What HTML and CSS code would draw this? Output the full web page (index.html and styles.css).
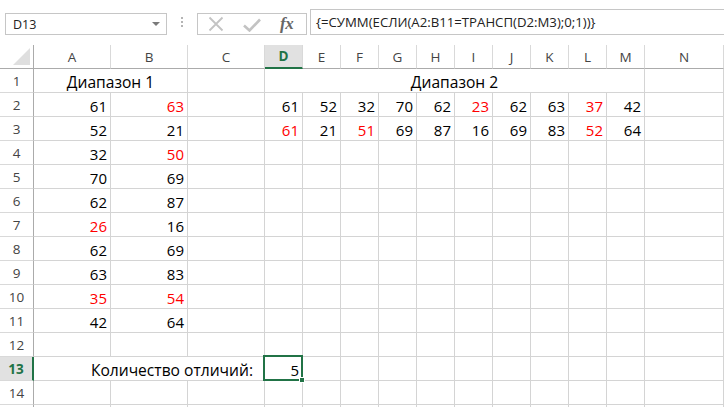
FILE: index.html
```html
<!DOCTYPE html>
<html lang="ru">
<head>
<meta charset="utf-8">
<link rel="stylesheet" href="styles.css">
</head>
<body>
<div class="app">
  <div class="toolbar">
    <div class="namebox">
      <span class="nb-text">D13</span>
      <svg class="caret" width="8" height="5" viewBox="0 0 8 5"><path d="M0 0H8L4 4Z" fill="#7a7a7a"/></svg>
    </div>
    <div class="dots"><i></i><i></i><i></i></div>
    <div class="btns">
      <svg class="ico-x" width="16" height="16" viewBox="0 0 16 16"><path d="M1.5 1.5L14.5 14.5M14.5 1.5L1.5 14.5" stroke="#c3c3c3" stroke-width="1.8" fill="none"/></svg>
      <svg class="ico-ok" width="18" height="14" viewBox="0 0 18 14"><path d="M1 7.5L6.5 12.5L17 1.5" stroke="#c3c3c3" stroke-width="2.6" fill="none"/></svg>
      <span class="fx">fx</span>
    </div>
    <div class="formula">{=СУММ(ЕСЛИ(A2:B11=ТРАНСП(D2:M3);0;1))}</div>
  </div>

  <div class="sheet">
    <!-- header row -->
    <div class="corner"><svg width="17" height="17" viewBox="0 0 17 17"><path d="M17 0V17H0Z" fill="#dfdfdf"/></svg></div>
    <div class="h">A</div><div class="h">B</div><div class="h">C</div><div class="h hsel">D</div><div class="h">E</div><div class="h">F</div><div class="h">G</div><div class="h">H</div><div class="h">I</div><div class="h">J</div><div class="h">K</div><div class="h">L</div><div class="h">M</div><div class="h">N</div>

    <!-- row 1 -->
    <div class="rh">1</div>
    <div class="c ctr txt span2">Диапазон 1</div><div class="c"></div>
    <div class="c ctr txt span10">Диапазон 2</div><div class="c"></div>

    <!-- row 2 -->
    <div class="rh">2</div>
    <div class="c n">61</div><div class="c n r">63</div><div class="c"></div>
    <div class="c n">61</div><div class="c n">52</div><div class="c n">32</div><div class="c n">70</div><div class="c n">62</div><div class="c n r">23</div><div class="c n">62</div><div class="c n">63</div><div class="c n r">37</div><div class="c n">42</div><div class="c"></div>

    <!-- row 3 -->
    <div class="rh">3</div>
    <div class="c n">52</div><div class="c n">21</div><div class="c"></div>
    <div class="c n r">61</div><div class="c n">21</div><div class="c n r">51</div><div class="c n">69</div><div class="c n">87</div><div class="c n">16</div><div class="c n">69</div><div class="c n">83</div><div class="c n r">52</div><div class="c n">64</div><div class="c"></div>

    <!-- row 4 -->
    <div class="rh">4</div>
    <div class="c n">32</div><div class="c n r">50</div>
    <div class="c"></div><div class="c"></div><div class="c"></div><div class="c"></div><div class="c"></div><div class="c"></div><div class="c"></div><div class="c"></div><div class="c"></div><div class="c"></div><div class="c"></div><div class="c"></div>

    <!-- row 5 -->
    <div class="rh">5</div>
    <div class="c n">70</div><div class="c n">69</div>
    <div class="c"></div><div class="c"></div><div class="c"></div><div class="c"></div><div class="c"></div><div class="c"></div><div class="c"></div><div class="c"></div><div class="c"></div><div class="c"></div><div class="c"></div><div class="c"></div>

    <!-- row 6 -->
    <div class="rh">6</div>
    <div class="c n">62</div><div class="c n">87</div>
    <div class="c"></div><div class="c"></div><div class="c"></div><div class="c"></div><div class="c"></div><div class="c"></div><div class="c"></div><div class="c"></div><div class="c"></div><div class="c"></div><div class="c"></div><div class="c"></div>

    <!-- row 7 -->
    <div class="rh">7</div>
    <div class="c n r">26</div><div class="c n">16</div>
    <div class="c"></div><div class="c"></div><div class="c"></div><div class="c"></div><div class="c"></div><div class="c"></div><div class="c"></div><div class="c"></div><div class="c"></div><div class="c"></div><div class="c"></div><div class="c"></div>

    <!-- row 8 -->
    <div class="rh">8</div>
    <div class="c n">62</div><div class="c n">69</div>
    <div class="c"></div><div class="c"></div><div class="c"></div><div class="c"></div><div class="c"></div><div class="c"></div><div class="c"></div><div class="c"></div><div class="c"></div><div class="c"></div><div class="c"></div><div class="c"></div>

    <!-- row 9 -->
    <div class="rh">9</div>
    <div class="c n">63</div><div class="c n">83</div>
    <div class="c"></div><div class="c"></div><div class="c"></div><div class="c"></div><div class="c"></div><div class="c"></div><div class="c"></div><div class="c"></div><div class="c"></div><div class="c"></div><div class="c"></div><div class="c"></div>

    <!-- row 10 -->
    <div class="rh">10</div>
    <div class="c n r">35</div><div class="c n r">54</div>
    <div class="c"></div><div class="c"></div><div class="c"></div><div class="c"></div><div class="c"></div><div class="c"></div><div class="c"></div><div class="c"></div><div class="c"></div><div class="c"></div><div class="c"></div><div class="c"></div>

    <!-- row 11 -->
    <div class="rh">11</div>
    <div class="c n">42</div><div class="c n">64</div>
    <div class="c"></div><div class="c"></div><div class="c"></div><div class="c"></div><div class="c"></div><div class="c"></div><div class="c"></div><div class="c"></div><div class="c"></div><div class="c"></div><div class="c"></div><div class="c"></div>

    <!-- row 12 -->
    <div class="rh">12</div>
    <div class="c"></div><div class="c"></div><div class="c"></div><div class="c"></div><div class="c"></div><div class="c"></div><div class="c"></div><div class="c"></div><div class="c"></div><div class="c"></div><div class="c"></div><div class="c"></div><div class="c"></div><div class="c"></div>

    <!-- row 13 -->
    <div class="rh rhsel">13</div>
    <div class="c n txt span3 label">Количество отличий:</div>
    <div class="c n sel">5<span class="selbox"><span class="handle"></span></span></div>
    <div class="c"></div><div class="c"></div><div class="c"></div><div class="c"></div><div class="c"></div><div class="c"></div><div class="c"></div><div class="c"></div><div class="c"></div><div class="c"></div>

    <!-- row 14 -->
    <div class="rh">14</div>
    <div class="c"></div><div class="c"></div><div class="c"></div><div class="c"></div><div class="c"></div><div class="c"></div><div class="c"></div><div class="c"></div><div class="c"></div><div class="c"></div><div class="c"></div><div class="c"></div><div class="c"></div><div class="c"></div>

    <!-- row 15 (only its top edge is visible) -->
    <div class="rh"></div>
    <div class="c"></div><div class="c"></div><div class="c"></div><div class="c"></div><div class="c"></div><div class="c"></div><div class="c"></div><div class="c"></div><div class="c"></div><div class="c"></div><div class="c"></div><div class="c"></div><div class="c"></div><div class="c"></div>
  </div>
</div>
</body>
</html>
```

FILE: styles.css
```css
* { box-sizing: border-box; }
html, body { margin: 0; padding: 0; background: #ffffff; }
body { width: 724px; height: 407px; overflow: hidden; font-family: "Open Sans", "Liberation Sans", sans-serif; }

.app { width: 724px; height: 407px; overflow: hidden; }

/* ---------- formula bar ---------- */
.toolbar {
  height: 45px;
  display: flex;
  align-items: flex-start;
  background: #ffffff;
}
.namebox {
  margin-top: 13px;
  margin-left: 5px;
  width: 162px;
  height: 22px;
  border: 1px solid #c6c6c6;
  display: flex;
  align-items: center;
  padding-left: 7px;
  padding-right: 6px;
  font-size: 12.5px;
  color: #222;
}
.nb-text { flex: 1; }
.caret { margin-top: 1px; }
.dots {
  margin-top: 17px;
  margin-left: 14px;
  width: 2px;
  display: flex;
  flex-direction: column;
  gap: 2px;
}
.dots i { display: block; width: 2px; height: 2px; background: #b4b4b4; }
.btns {
  margin-top: 13px;
  margin-left: 14px;
  width: 110px;
  height: 22px;
  border: 1px solid #c6c6c6;
  display: flex;
  align-items: center;
  padding-left: 10px;
}
.ico-ok { margin-left: 19px; margin-top: 1px; }
.fx {
  margin-left: 19px;
  font-family: "Liberation Serif", "DejaVu Serif", serif;
  font-style: italic;
  font-weight: bold;
  font-size: 17px;
  color: #666;
  line-height: 1;
  margin-top: -2px;
  letter-spacing: -0.5px;
}
.formula {
  margin-top: 9px;
  margin-left: 3px;
  flex: 1;
  height: 26px;
  border: 1px solid #c6c6c6;
  border-right: none;
  padding-left: 5px;
  font-size: 13.2px;
  color: #222;
  display: flex;
  align-items: center;
  white-space: nowrap;
}

/* ---------- sheet ---------- */
.sheet {
  display: grid;
  grid-template-columns: 34px 77px 77px 77px repeat(10, 38px) 79px;
  grid-auto-rows: 24px;
}
.corner {
  border-right: 1px solid #ababab;
  border-bottom: 1px solid #ababab;
  display: flex;
  align-items: flex-end;
  justify-content: flex-end;
  padding: 0 3px 3px 0;
}
.h {
  border-right: 1px solid #d9d9d9;
  border-bottom: 1px solid #ababab;
  display: flex;
  align-items: center;
  justify-content: center;
  font-size: 13.5px;
  color: #444;
}
.h.hsel {
  background: #e1e1e1;
  border-bottom: 2px solid #217346;
  color: #217346;
  font-weight: bold;
}
.rh {
  border-right: 1px solid #ababab;
  border-bottom: 1px solid #d9d9d9;
  display: flex;
  align-items: center;
  justify-content: center;
  font-size: 13.5px;
  color: #444;
}
.rh.rhsel {
  background: #e1e1e1;
  border-right: 2px solid #217346;
  color: #217346;
  font-weight: bold;
}
.c {
  border-right: 1px solid #d4d4d4;
  border-bottom: 1px solid #d4d4d4;
  display: flex;
  align-items: flex-end;
  font-size: 15px;
  line-height: 20px;
  color: #000;
  padding: 0 3px 0 3px;
  white-space: nowrap;
}
.c.n { justify-content: flex-end; }
.c.ctr { justify-content: center; }
.c.txt { font-size: 15.6px; }
.c.r { color: #ff0000; }
.span2 { grid-column: span 2; }
.span3 { grid-column: span 3; }
.span10 { grid-column: span 10; }
.label { padding-right: 11px; }
.sel { position: relative; }
.selbox {
  position: absolute;
  left: -2px;
  top: -2px;
  right: -1px;
  bottom: -1px;
  border: 2px solid #217346;
}
.handle {
  position: absolute;
  right: -4px;
  bottom: -4px;
  width: 6px;
  height: 6px;
  background: #217346;
  border: 1px solid #ffffff;
}
```
